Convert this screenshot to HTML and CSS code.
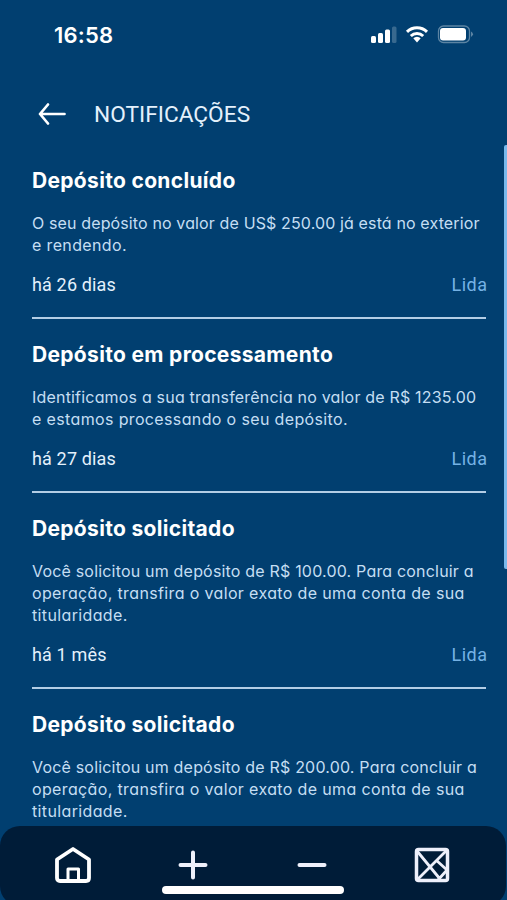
FILE: index.html
```html
<!DOCTYPE html>
<html lang="pt-BR">
<head>
<meta charset="utf-8">
<title>Notificações</title>
<link rel="stylesheet" href="styles.css">
</head>
<body>
<div class="app">
  <div class="status">
    <span class="clock">16:58</span>
    <svg class="indicators" width="104" height="20" viewBox="0 0 104 20">
      <g fill="#fff">
        <rect x="1" y="11" width="5" height="7" rx="1.5"/>
        <rect x="8" y="8" width="5" height="10" rx="1.5"/>
        <rect x="15" y="4.500" width="5" height="13.500" rx="1.500"/>
        <rect x="22" y="1.500" width="4.500" height="16.500" rx="1.500" opacity=".22"/>
        <path d="M43.300 13.300a5.200 5.200 0 0 1 7.400 0l-3.700 4.300z"/>
      </g>
      <g fill="none" stroke="#fff" stroke-width="3">
        <path d="M37 6.800a14.500 14.500 0 0 1 20 0"/>
        <path d="M40.800 11a9 9 0 0 1 12.400 0"/>
      </g>
      <rect x="68.500" y="1" width="31" height="16.500" rx="5" fill="none" stroke="#fff" stroke-opacity=".36" stroke-width="1.300"/>
      <rect x="70" y="3" width="26" height="12.500" rx="3" fill="#fff"/>
      <path d="M101 6.500q4 2.700 0 5.400z" fill="#fff" opacity=".36"/>
    </svg>
  </div>
  <header class="header">
    <svg width="28" height="24" viewBox="0 0 28 24" fill="none" stroke="#fff" stroke-width="2.700" stroke-linecap="round" stroke-linejoin="round">
      <path d="M26.500 12H2M10 2.500 2 12l8 9.500"/>
    </svg>
    <h1>NOTIFICAÇÕES</h1>
  </header>
  <main class="list">
    <article class="item">
      <h2>Depósito concluído</h2>
      <p><span class="tight">O seu depósito no valor de US$ 250.00 já está no exterior</span><br><span class="wide">e rendendo.</span></p>
      <div class="meta"><span>há 26 dias</span><span class="read">Lida</span></div>
    </article>
    <article class="item">
      <h2>Depósito em processamento</h2>
      <p>Identificamos a sua transferência no valor de R$ 1235.00<br><span class="wide">e estamos processando o seu depósito.</span></p>
      <div class="meta"><span>há 27 dias</span><span class="read">Lida</span></div>
    </article>
    <article class="item">
      <h2>Depósito solicitado</h2>
      <p>Você solicitou um depósito de R$ 100.00. Para concluir a<br><span class="wide">operação, transfira o valor exato de uma conta de sua<br>titularidade.</span></p>
      <div class="meta"><span>há 1 mês</span><span class="read">Lida</span></div>
    </article>
    <article class="item">
      <h2>Depósito solicitado</h2>
      <p>Você solicitou um depósito de R$ 200.00. Para concluir a<br><span class="wide">operação, transfira o valor exato de uma conta de sua<br>titularidade.</span></p>
    </article>
  </main>
  <div class="scrollbar"></div>
  <nav class="tabs">
    <svg width="38" height="38" viewBox="0 0 38 38" fill="none" stroke="#fff" stroke-width="3.800" stroke-linejoin="round">
      <path d="M3 13.500 19 3 35 13.500V32q0 3-3 3H6q-3 0-3-3z"/>
      <path d="M14 35V23h10.500V35" stroke-width="3"/>
    </svg>
    <svg width="38" height="38" viewBox="0 0 38 38" fill="none" stroke="#eef0fb" stroke-width="4" stroke-linecap="round">
      <path d="M19 6.500v25M6.500 19h25"/>
    </svg>
    <svg width="38" height="38" viewBox="0 0 38 38" fill="none" stroke="#eef0fb" stroke-width="4" stroke-linecap="round">
      <path d="M6.500 19h25"/>
    </svg>
    <svg width="38" height="38" viewBox="0 0 38 38" fill="none" stroke="#eef0fb" stroke-width="2.800" stroke-linejoin="round">
      <rect x="3.500" y="3.500" width="31" height="31" rx="2" stroke-width="3.500"/>
      <path d="M4 5l23 28M34 4L4 34M23 14l11 10-9 10"/>
    </svg>
    <div class="home-bar"></div>
  </nav>
</div>
</body>
</html>
```
FILE: styles.css
```css
* { box-sizing: border-box; margin: 0; }
body { background: #013f70; }
.app {
  position: relative;
  width: 507px;
  height: 900px;
  overflow: hidden;
  display: flex;
  flex-direction: column;
  background: #013f70;
  font-family: Roboto, sans-serif;
  color: #e4f1fc;
}
.status {
  display: flex;
  justify-content: space-between;
  height: 70px;
  padding: 25px 33px 0 54px;
}
.clock { font: 600 22px/20px Inter, sans-serif; color: #fff; letter-spacing: .2px; }
.header {
  display: flex;
  align-items: center;
  gap: 28px;
  height: 88px;
  padding-left: 38px;
}
.header h1 { font-size: 22.700px; line-height: 28px; font-weight: 400; padding-top: 1px; }
.list { padding: 11px 21px 0 32px; }
.item { border-bottom: 2px solid #b3cde5; padding-bottom: 20px; margin-bottom: 24px; }
.item h2 { font: 700 21px/24px Inter, sans-serif; color: #fff; white-space: nowrap; letter-spacing: .32px; }
.item p {
  margin-top: 19px;
  font: 400 16px/22px Inter, sans-serif;
  font-feature-settings: "cv11";
  letter-spacing: .19px;
  color: #c5def3;
  white-space: nowrap;
}
.item .tight { letter-spacing: .13px; }
.item .wide { letter-spacing: .36px; }
.meta { display: flex; justify-content: space-between; margin-top: 17px; font-size: 18px; line-height: 24px; letter-spacing: .15px; }
.read { color: #75b2e5; letter-spacing: .5px; margin-right: -1.500px; }
.scrollbar {
  position: absolute;
  right: 0;
  top: 145px;
  width: 3px;
  height: 424px;
  background: #79b9ec;
  border-radius: 2px 0 0 2px;
}
.tabs {
  position: absolute;
  left: 0;
  top: 826px;
  width: 506px;
  height: 80px;
  padding: 20px 55px 0 54px;
  display: flex;
  align-items: flex-start;
  justify-content: space-between;
  background: #001c38;
  border-radius: 20px;
}
.home-bar {
  position: absolute;
  left: 162px;
  top: 60px;
  width: 182px;
  height: 8px;
  border-radius: 4px;
  background: #fff;
}
```
